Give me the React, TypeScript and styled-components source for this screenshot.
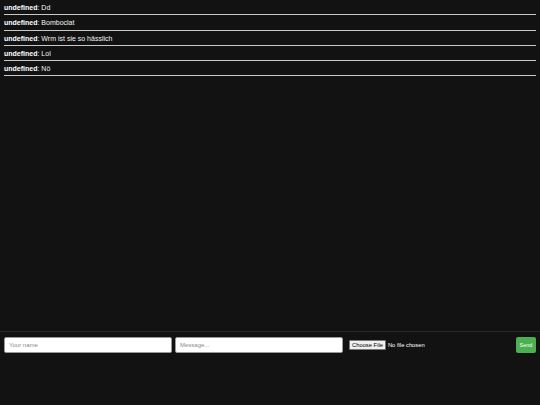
import React from "react";
import styled, { createGlobalStyle } from "styled-components";

const Global = createGlobalStyle`
  html, body { margin: 0; padding: 0; background: #121212; }
  body { font-family: "Liberation Sans", Arial, sans-serif; color: #fff; }
  * { box-sizing: border-box; }
`;

const Page = styled.div`
  height: 100vh;
  display: flex;
  flex-direction: column;
  background: #121212;
`;

const Messages = styled.div`
  flex: 1;
  padding: 0 4px;
  overflow: hidden;
`;

const Message = styled.div`
  font-size: 7px;
  line-height: 9px;
  padding: 3px 0 2.25px;
  border-bottom: 1px solid #c8c8c8;
  color: #f2f2f2;
`;

const Name = styled.strong`
  font-weight: 700;
  color: #fff;
`;

const Footer = styled.form`
  height: 74px;
  flex: none;
  border-top: 1px solid #2a2a2a;
  padding: 5px 4px 0;
  display: flex;
  align-items: flex-start;
  gap: 3px;
`;

const TextInput = styled.input`
  flex: 1;
  min-width: 0;
  height: 16px;
  padding: 0 4px;
  font-size: 6px;
  font-family: "Liberation Sans", Arial, sans-serif;
  background: #fff;
  border: 1px solid #999;
  border-radius: 2px;
  color: #222;
  outline: none;
  &::placeholder { color: #8a8a8a; }
`;

const FileInput = styled.input`
  width: 164px;
  margin: 3px 0 0 3px;
  font-size: 5.8px;
  font-family: "Liberation Sans", Arial, sans-serif;
  color: #fff;
  &::file-selector-button {
    font-size: 5.8px;
    font-family: "Liberation Sans", Arial, sans-serif;
    padding: 1px 2px;
    margin-right: 2px;
    background: #efefef;
    border: 1px solid #767676;
    border-radius: 1px;
    color: #000;
  }
`;

const SendButton = styled.button`
  width: 20px;
  height: 16px;
  padding: 0;
  font-size: 5.5px;
  font-family: "Liberation Sans", Arial, sans-serif;
  color: #fff;
  background: #4caf50;
  border: none;
  border-radius: 2px;
`;

const msgs = [
  ["undefined", "Dd"],
  ["undefined", "Bomboclat"],
  ["undefined", "Wrm ist sie so hässlich"],
  ["undefined", "Lol"],
  ["undefined", "Nö"],
];

export default function App() {
  return (
    <Page>
      <Global />
      <Messages>
        {msgs.map(([n, t], i) => (
          <Message key={i}>
            <Name>{n}</Name>: {t}
          </Message>
        ))}
      </Messages>
      <Footer onSubmit={(e) => e.preventDefault()}>
        <TextInput placeholder="Your name" />
        <TextInput placeholder="Message..." />
        <FileInput type="file" />
        <SendButton type="submit">Send</SendButton>
      </Footer>
    </Page>
  );
}
